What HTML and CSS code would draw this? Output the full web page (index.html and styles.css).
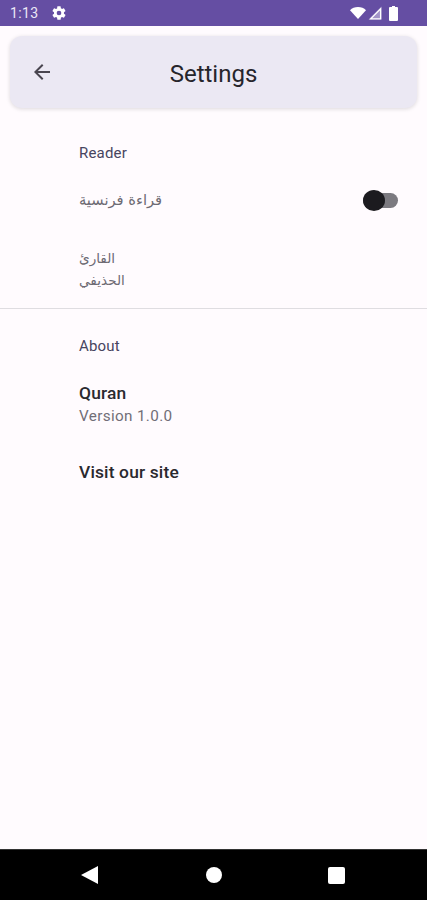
FILE: index.html
```html
<!DOCTYPE html>
<html lang="en">
<head>
<meta charset="utf-8">
<title>Settings</title>
<link rel="stylesheet" href="styles.css">
</head>
<body>
<div class="page">
  <div class="status">
    <span class="time">1:13</span>
    <svg class="gear" width="16" height="16" viewBox="0 0 24 24"><path fill="#fff" d="M19.4 13c.04-.32.07-.65.07-1s-.03-.68-.07-1l2.1-1.65c.2-.15.25-.42.12-.64l-2-3.46c-.12-.22-.38-.3-.6-.22l-2.5 1c-.52-.4-1.08-.73-1.7-.98l-.37-2.65A.5.5 0 0 0 14 2h-4a.5.5 0 0 0-.5.42l-.37 2.65c-.62.25-1.18.58-1.7.98l-2.5-1c-.22-.08-.48 0-.6.22l-2 3.46c-.13.22-.07.49.12.64L4.57 11c-.04.32-.07.66-.07 1s.03.68.07 1l-2.11 1.65c-.19.15-.25.42-.12.64l2 3.46c.12.22.38.3.6.22l2.5-1c.52.4 1.08.73 1.7.98l.37 2.65c.04.24.25.42.49.42h4c.25 0 .46-.18.49-.42l.37-2.65c.62-.25 1.18-.58 1.7-.98l2.5 1c.22.08.48 0 .6-.22l2-3.46c.13-.22.07-.49-.12-.64L19.4 13zM12 15.5a3.5 3.5 0 1 1 0-7 3.5 3.5 0 0 1 0 7z"/></svg>
    <span class="status-right">
      <svg class="wifi" width="16" height="12" viewBox="0 0 16 12"><path fill="#fff" d="M0 3.2C2 1.2 4.8 0 8 0s6 1.2 8 3.200L8 12z"/></svg>
      <svg class="signal" width="14" height="14" viewBox="0 0 14 14"><path fill="#fff" fill-opacity=".4" d="M13.500 .5V13.500H.5z"/><path fill="none" stroke="#fff" stroke-width="1.300" d="M12.600 2.800V12.800H2.700z"/></svg>
      <svg class="battery" width="9" height="15" viewBox="0 0 9 15"><path fill="#fff" d="M3 0h3v1h2a1 1 0 0 1 1 1v12a1 1 0 0 1-1 1H1a1 1 0 0 1-1-1V2a1 1 0 0 1 1-1h2z"/></svg>
    </span>
  </div>

  <header class="appbar">
    <svg class="back" width="24" height="24" viewBox="0 0 24 24"><path fill="#49454f" d="M20 11H7.830l5.590-5.590L12 4l-8 8 8 8 1.410-1.410L7.830 13H20z"/></svg>
    <h1 class="title">Settings</h1>
  </header>

  <main class="content">
    <section class="group group-reader">
      <h2 class="group-title">Reader</h2>
      <div class="row-switch">
        <span class="arabic arabic-wide">قراءة فرنسية</span>
        <span class="switch"><span class="knob"></span></span>
      </div>
      <div class="reciter">
        <div class="arabic">القارئ</div>
        <div class="arabic">الحذيفي</div>
      </div>
    </section>
    <section class="group group-about">
      <h2 class="group-title">About</h2>
      <div class="item-title quran">Quran</div>
      <div class="item-sub">Version 1.0.0</div>
      <div class="item-title visit">Visit our site</div>
    </section>
  </main>

  <nav class="navbar">
    <svg class="nav-back" width="18" height="20" viewBox="0 0 18 20"><path fill="#fff" d="M0 10 17 1v18z"/></svg>
    <span class="nav-circle"></span>
    <span class="nav-square"></span>
  </nav>
</div>
</body>
</html>
```
FILE: styles.css
```css
* { box-sizing: border-box; }
html, body { margin: 0; padding: 0; }
body { font-family: Roboto, "DejaVu Sans", sans-serif; background: #fffbfe; }
.page { width: 427px; height: 900px; display: flex; flex-direction: column; overflow: hidden; }

.status { height: 26px; flex: none; background: #654ea3; color: #ece8f6; display: flex; align-items: center; padding: 0 10px; }
.time { font-size: 14px; letter-spacing: .4px; }
.gear { margin-left: 12px; }
.status-right { margin-left: auto; margin-right: 19px; display: flex; align-items: center; }
.signal { margin-left: 2px; }
.battery { margin-left: 7px; }

.appbar { flex: none; margin: 10px 10px 0; height: 72px; border-radius: 12px; background: #ebe8f3; box-shadow: 0 1px 4px rgba(0,0,0,.14); display: flex; align-items: center; position: relative; padding-left: 20px; }
.title { position: absolute; left: 0; right: 0; margin: 0; text-align: center; font-weight: 400; font-size: 24px; color: #26252b; line-height: 28px; top: 24px; }

.content { flex: 1; padding-top: 35px; }
.group { padding-left: 79px; }
.group-reader { padding-right: 29px; padding-bottom: 16px; border-bottom: 1px solid #dfdde1; height: 166px; }
.group-about { padding-top: 27px; }
.group-title { margin: 0; font-size: 15px; font-weight: 400; color: #474560; line-height: 20px; letter-spacing: .2px; }
.arabic { font-family: "DejaVu Sans", "Noto Sans", sans-serif; font-size: 13.600px; color: #6d6a73; line-height: 22px; }
.arabic-wide { font-size: 14.700px; }
.row-switch { display: flex; justify-content: space-between; align-items: center; margin-top: 25px; height: 24px; }
.switch { width: 35px; height: 15px; border-radius: 8px; background: #7c7a80; position: relative; display: block; }
.knob { position: absolute; left: 0; top: -3px; width: 22px; height: 21px; border-radius: 50%; background: #1c1b1f; }
.reciter { margin-top: 35px; }
.item-title { font-size: 17.400px; font-weight: 500; color: #2a292e; line-height: 22px; letter-spacing: .16px; }
.quran { margin-top: 26px; }
.item-sub { margin-top: 1px; font-size: 15.250px; color: #716e77; line-height: 22px; letter-spacing: .35px; }
.visit { margin-top: 34px; }

.navbar { flex: none; height: 51px; background: #000; border-top: 1px solid #333; position: relative; }
.nav-back { position: absolute; left: 81px; top: 15px; }
.nav-circle { position: absolute; left: 206px; top: 17px; width: 16px; height: 16px; border-radius: 50%; background: #fff; }
.nav-square { position: absolute; left: 328px; top: 17px; width: 17px; height: 17px; border-radius: 2px; background: #fff; }
```
